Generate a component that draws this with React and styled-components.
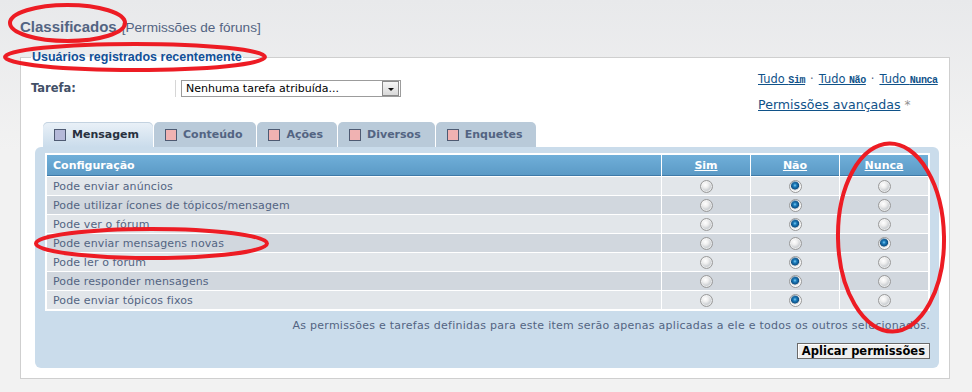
import React from 'react';
import styled, { createGlobalStyle } from 'styled-components';

const GlobalStyle = createGlobalStyle`
  html, body {
    margin: 0;
    padding: 0;
  }
  body {
    background: linear-gradient(#e8e9eb 0, #f2f2f2 150px, #f2f2f2 100%);
    font-family: "DejaVu Sans", Verdana, sans-serif;
    min-height: 392px;
  }
`;

const Page = styled.div`
  position: relative;
  width: 930px;
  padding: 18px 0 0 20px;
`;

const TitleRow = styled.div`
  display: flex;
  align-items: baseline;
  gap: 5px;
  height: 18px;
  color: #536482;
  font-family: "Liberation Sans", Arial, sans-serif;
`;

const Title = styled.h1`
  margin: 0;
  font-size: 15px;
  line-height: 18px;
  font-weight: bold;
`;

const SubTitle = styled.span`
  font-size: 13.6px;
`;

const Fieldset = styled.fieldset`
  margin: 14px 0 0;
  padding: 0 10px 10px;
  border: 1px solid #cfcfcf;
  background: #fff;
  min-width: 0;
`;

const Legend = styled.legend`
  margin-left: 0;
  padding: 0 1px;
  font-family: "Liberation Sans", Arial, sans-serif;
  font-size: 12.5px;
  line-height: 15px;
  font-weight: bold;
  color: #115098;
`;

const TopArea = styled.div`
  display: flex;
  justify-content: space-between;
  padding-top: 7px;
  height: 40px;
`;

const TaskRow = styled.div`
  display: flex;
  align-items: center;
  height: 17px;
  margin-top: 8px;
`;

const TaskLabel = styled.span`
  width: 144px;
  font-size: 11.5px;
  font-weight: bold;
  color: #425067;
  border-right: 1px solid #d6d6d6;
  line-height: 17px;
`;

const Select = styled.div`
  display: flex;
  align-items: center;
  justify-content: space-between;
  margin-left: 5px;
  width: 214px;
  height: 15px;
  border: 1px solid #9c9c9c;
  background: #fff;
  font-size: 11px;
  color: #000;
  padding-left: 4px;
  box-sizing: content-box;
`;

const SelectArrow = styled.span`
  display: flex;
  align-items: center;
  justify-content: center;
  width: 15px;
  height: 13px;
  margin-right: 1px;
  border: 1px solid #8a8a8a;
  background: linear-gradient(#f6f6f6, #d9d9d9);

  &::after {
    content: '';
    border-left: 3px solid transparent;
    border-right: 3px solid transparent;
    border-top: 3px solid #111;
    margin-top: 2px;
  }
`;

const QuickLinks = styled.div`
  display: flex;
  flex-direction: column;
  gap: 9px;
  width: 181px;
`;

const LinkLine = styled.div`
  font-size: 11.4px;
  line-height: 15px;
  color: #536482;
  white-space: nowrap;
`;

const Link = styled.a`
  color: #105289;
  text-decoration: underline;
  font-size: ${p => (p.$big ? '12.6px' : 'inherit')};
`;

const Mono = styled.span`
  font-family: "Liberation Mono", "Courier New", monospace;
  font-size: 10px;
  font-weight: bold;
  letter-spacing: -0.4px;
`;

const Dot = styled.span`
  margin: 0 5px;
  color: #536482;
`;

const Asterisk = styled.span`
  color: #8f8f8f;
  margin-left: 4px;
  font-size: 12px;
`;

const TabBar = styled.div`
  display: flex;
  gap: 1px;
  margin: 10px 0 0 12px;
  position: relative;
  z-index: 1;
`;

const Tab = styled.div`
  display: flex;
  align-items: center;
  gap: 6px;
  height: 25px;
  padding: 0 14px 0 11px;
  border-radius: 5px 5px 0 0;
  font-size: 11px;
  font-weight: bold;
  color: ${p => (p.$active ? '#28313f' : '#536482')};
  background: ${p =>
    p.$active ? 'linear-gradient(#eaf1f8, #cadceb)' : '#b9cad9'};
  box-shadow: ${p => (p.$active ? 'inset 0 1px 0 #c3d2e0' : 'none')};
`;

const TabBox = styled.span`
  width: 10px;
  height: 10px;
  border: 1px solid #4e5a72;
  background: ${p => (p.$active ? '#b5b9d9' : '#f0b2b2')};
`;

const PermPanel = styled.div`
  margin-left: 4px;
  padding: 6px 9px 9px 10px;
  background: #cadceb;
  border-radius: 6px;
`;

const Table = styled.table`
  width: 100%;
  border-collapse: separate;
  border-spacing: 1px;
  border: 1px solid #fff;
  background: #fff;
`;

const HeadCell = styled.th`
  height: 20px;
  padding: ${p => (p.$center ? '0' : '0 0 0 6px')};
  text-align: ${p => (p.$center ? 'center' : 'left')};
  width: ${p => (p.$center ? '88px' : 'auto')};
  font-size: 11px;
  font-weight: bold;
  color: #fff;
  background: linear-gradient(#70afd9, #5b9ac6);
  border-bottom: 1px solid #3f7aa8;
  text-decoration: ${p => (p.$center ? 'underline' : 'none')};
`;

const Row = styled.tr`
  background: ${p => (p.$alt ? '#d1d7de' : '#e2e6ea')};
`;

const LabelCell = styled.td`
  height: 18px;
  padding: 0 0 0 6px;
  font-size: 11px;
  letter-spacing: 0.12px;
  color: #536482;
  white-space: nowrap;
`;

const RadioCell = styled.td`
  text-align: center;
  padding: 0;
  line-height: 0;
`;

const Radio = styled.span`
  display: inline-block;
  width: 11px;
  height: 11px;
  border-radius: 50%;
  border: 1px solid #9a9a9a;
  background: ${p =>
    p.$checked
      ? 'radial-gradient(circle at 45% 40%, #7fd0f5 0, #1d7dbd 1.6px, #0d4f83 3.8px, #c9ced3 4.4px, #f6f6f6 5.5px)'
      : 'radial-gradient(circle at 40% 35%, #ffffff 0, #eeeeee 3px, #cfd2d5 5.5px)'};
  box-shadow: inset 0 0 0 1px rgba(255, 255, 255, 0.5);
`;

const Note = styled.p`
  margin: 8px 0 0;
  text-align: right;
  font-size: 11px;
  letter-spacing: 0.26px;
  line-height: 14px;
  color: #536482;
`;

const ButtonRow = styled.div`
  display: flex;
  justify-content: flex-end;
  margin-top: 10px;
`;

const Button = styled.button`
  height: 16px;
  padding: 0 4px;
  border: 1px solid #6a6a6a;
  background: #efefef;
  font-family: "DejaVu Sans", Verdana, sans-serif;
  font-size: 11.5px;
  font-weight: bold;
  line-height: 14px;
  color: #000;
  box-shadow: inset 1px 1px 0 #fff;
`;

const Marks = styled.svg`
  position: absolute;
  left: 0;
  top: 0;
  width: 972px;
  height: 392px;
  pointer-events: none;
`;

const tabs = [
  { name: 'Mensagem', active: true },
  { name: 'Conteúdo' },
  { name: 'Ações' },
  { name: 'Diversos' },
  { name: 'Enquetes' },
];

// which column is set: 0 = Sim, 1 = Não, 2 = Nunca
const perms = [
  ['Pode enviar anúncios', 1],
  ['Pode utilizar ícones de tópicos/mensagem', 1],
  ['Pode ver o fórum', 1],
  ['Pode enviar mensagens novas', 2],
  ['Pode ler o fórum', 1],
  ['Pode responder mensagens', 1],
  ['Pode enviar tópicos fixos', 1],
];

const App = () => {
  return (
    <Page>
      <GlobalStyle />
      <TitleRow>
        <Title>Classificados</Title>
        <SubTitle>[Permissões de fóruns]</SubTitle>
      </TitleRow>

      <Fieldset>
        <Legend>Usuários registrados recentemente</Legend>

        <TopArea>
          <TaskRow>
            <TaskLabel>Tarefa:</TaskLabel>
            <Select>
              Nenhuma tarefa atribuída...
              <SelectArrow />
            </Select>
          </TaskRow>
          <QuickLinks>
            <LinkLine>
              <Link href="#">Tudo <Mono>Sim</Mono></Link>
              <Dot>·</Dot>
              <Link href="#">Tudo <Mono>Não</Mono></Link>
              <Dot>·</Dot>
              <Link href="#">Tudo <Mono>Nunca</Mono></Link>
            </LinkLine>
            <LinkLine>
              <Link href="#" $big>Permissões avançadas</Link>
              <Asterisk>*</Asterisk>
            </LinkLine>
          </QuickLinks>
        </TopArea>

        <TabBar>
          {tabs.map(t => (
            <Tab key={t.name} $active={t.active}>
              <TabBox $active={t.active} />
              {t.name}
            </Tab>
          ))}
        </TabBar>

        <PermPanel>
          <Table>
            <thead>
              <tr>
                <HeadCell>Configuração</HeadCell>
                <HeadCell $center>Sim</HeadCell>
                <HeadCell $center>Não</HeadCell>
                <HeadCell $center>Nunca</HeadCell>
              </tr>
            </thead>
            <tbody>
              {perms.map(([label, value], i) => (
                <Row key={label} $alt={i % 2 === 1}>
                  <LabelCell>{label}</LabelCell>
                  {[0, 1, 2].map(c => (
                    <RadioCell key={c}>
                      <Radio $checked={c === value} />
                    </RadioCell>
                  ))}
                </Row>
              ))}
            </tbody>
          </Table>
          <Note>
            As permissões e tarefas definidas para este item serão apenas aplicadas a ele e todos os outros selecionados.
          </Note>
          <ButtonRow>
            <Button>Aplicar permissões</Button>
          </ButtonRow>
        </PermPanel>
      </Fieldset>

      <Marks viewBox="0 0 972 392">
        <g fill="none" stroke="#ed1c24" strokeWidth="4">
          <ellipse cx="67.5" cy="23" rx="57.5" ry="18" />
          <ellipse cx="135" cy="57" rx="130" ry="13" />
          <ellipse cx="151.5" cy="243.5" rx="115.5" ry="14.5" />
          <ellipse cx="891" cy="237.5" rx="53" ry="94" transform="rotate(-1 891 237.5)" />
        </g>
      </Marks>
    </Page>
  );
};

export default App;
